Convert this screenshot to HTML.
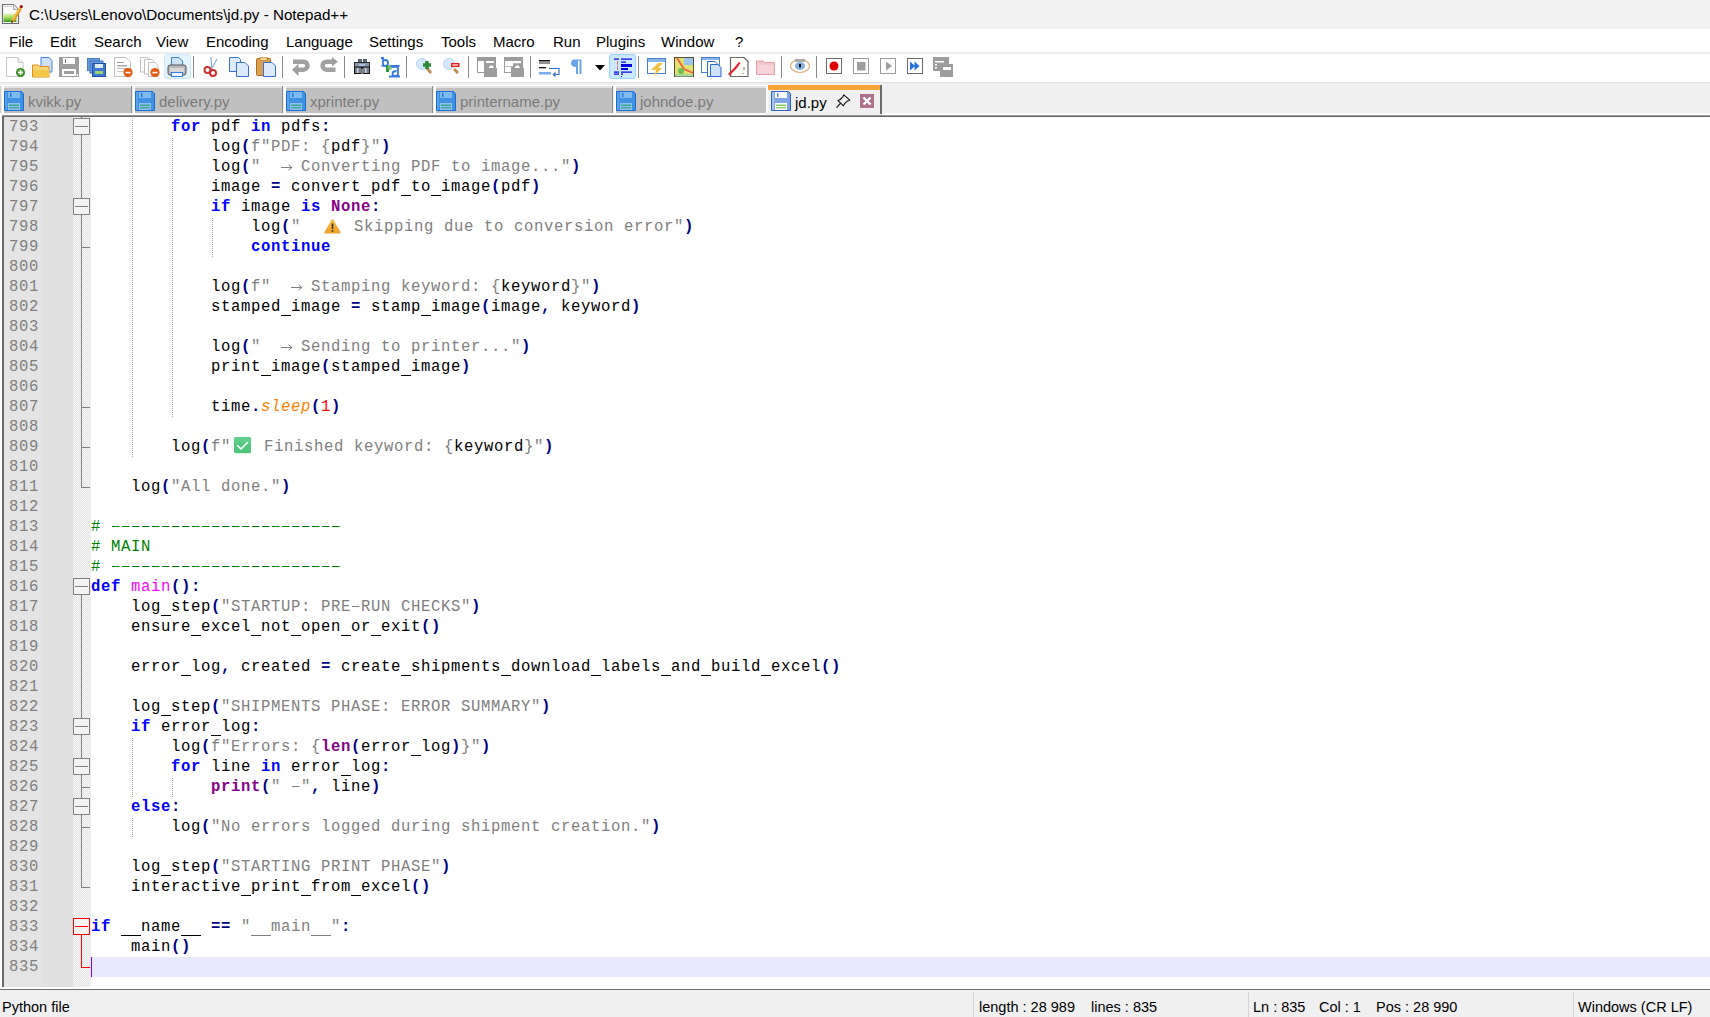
<!DOCTYPE html><html><head><meta charset="utf-8"><style>
*{margin:0;padding:0;box-sizing:border-box}
html,body{width:1710px;height:1017px;overflow:hidden;background:#fff;font-family:"Liberation Sans",sans-serif}
.abs{position:absolute}
#title{position:absolute;left:0;top:0;width:1710px;height:29px;background:#f2f2f2}
#title .t{position:absolute;left:29px;top:6px;font-size:15.2px;color:#000;white-space:pre}
#menu{position:absolute;left:0;top:29px;width:1710px;height:23px;background:#fff}
#menu span{position:absolute;top:4px;font-size:15px;color:#000;white-space:pre}
#sep1{position:absolute;left:0;top:52px;width:1710px;height:2px;background:#ededed}
#tool{position:absolute;left:0;top:54px;width:1710px;height:28px;background:#fff}
#tb1{position:absolute;left:0;top:82px;width:1710px;height:1px;background:#dedede}
#tabs{position:absolute;left:0;top:83px;width:1710px;height:32px;background:#f0f0f0}
.tab{position:absolute;top:2px;height:28px;background:linear-gradient(#fff 0 1.5px,#e2e2e2 1.5px 3px,#c0c0c0 3px)}
.tab .tx{position:absolute;top:8px;font-size:15px;color:#7a7a7a;white-space:pre}
#edframe{position:absolute;left:2px;top:115px;width:1708px;height:872px;background:linear-gradient(#9a9a9a 0 1px,#696969 1px)}
#stline{position:absolute;left:0;top:987px;width:1710px;height:4px;background:linear-gradient(#fff 0 2px,#6e6e6e 2px 3.5px,#f0f0f0 3.5px)}
#ed{position:absolute;left:4px;top:117px;width:1706px;height:870px;background:#fff;overflow:hidden}
#lnm{position:absolute;left:4px;top:117px;width:38px;height:870px;background:#e4e4e4}
#bmm{position:absolute;left:42px;top:117px;width:31px;height:870px;background:#e0e0e0}
#fdm{position:absolute;left:73px;top:117px;width:18px;height:870px;background-color:#f8f8f8;background-image:conic-gradient(#e2e2e2 25%,transparent 0 50%,#e2e2e2 0 75%,transparent 0);background-size:2px 2px}
.num{position:absolute;left:0;width:35px;height:20px;text-align:right;font-family:"Liberation Mono",monospace;font-size:15.6px;letter-spacing:0.64px;line-height:20px;color:#808080}
#nums{position:absolute;left:0;top:0}
.fm{position:absolute;left:73px}
.ln{position:absolute;left:91px;height:20px;width:1619px;font-family:"Liberation Mono",monospace;font-size:15.6px;letter-spacing:0.64px;line-height:20px;color:#000;white-space:pre}
.ln.cur{background:#e8e8ff}
.sp{white-space:pre}
.k{color:#0000ff;font-weight:bold}
.k2{color:#880088;font-weight:bold}
.s{color:#808080}
.o{color:#000080;font-weight:bold}
.c{color:#008000}
.d{color:#ff00ff}
.n{color:#ff0000}
.a{color:#ff8000;font-style:italic}
.ew{display:inline-block;width:23px;height:20px;vertical-align:top;position:relative}
.emo{position:absolute;left:0;top:0}
.usc{display:inline-block;width:10px;height:20px;vertical-align:top;-webkit-text-fill-color:transparent;background:linear-gradient(currentColor,currentColor) no-repeat 0 18px/10px 1.2px}
.dsh{display:inline-block;width:10px;height:20px;vertical-align:top;-webkit-text-fill-color:transparent;background:linear-gradient(currentColor,currentColor) no-repeat 1px 9px/7.5px 1px}
.arw{display:inline-block;width:10px;height:20px;vertical-align:top;position:relative}
.arw svg{position:absolute;left:0;top:0}
.ig{position:absolute;width:1px;height:20px;background-image:linear-gradient(transparent 50%,#a8a8a8 50%);background-size:1px 2px}
#caret{position:absolute;left:91px;top:957px;width:1px;height:20px;background:#8000ff}
#status{position:absolute;left:0;top:991px;width:1710px;height:26px;background:#f0f0f0}
#status span{position:absolute;top:8px;font-size:14.5px;color:#000;white-space:pre}
#status .sep{position:absolute;top:1px;width:1px;height:25px;background:#d5d5d5}
</style></head><body>
<div id="title"><svg class="abs" style="left:1px;top:3px" width="23" height="22" viewBox="0 0 23 22"><defs><linearGradient id="ng" x1="0" y1="0" x2="0" y2="1"><stop offset="0" stop-color="#e8f5c0"/><stop offset="0.45" stop-color="#a8dc60"/><stop offset="1" stop-color="#3a9a20"/></linearGradient></defs><path d="M1.5 1.5 H12.5 L17.5 6.5 V20.5 H1.5 Z" fill="#fbfbfb" stroke="#6e6e6e" stroke-width="1.2"/><path d="M12.5 1.5 V6.5 H17.5" fill="#e8e8e8" stroke="#9a9a9a" stroke-width="0.8"/><rect x="3" y="3" width="2" height="1" fill="#bbb"/><rect x="6" y="3" width="2" height="1" fill="#bbb"/><rect x="9" y="3" width="2" height="1" fill="#bbb"/><rect x="2.5" y="10.5" width="13" height="8.5" fill="url(#ng)"/><path d="M11.5 18.5 L19.6 5.2" stroke="#e8a020" stroke-width="3.2"/><path d="M11.3 17.2 L19 4.8" stroke="#f8d060" stroke-width="1"/><path d="M10.6 20.2 L11.8 17.6" stroke="#503010" stroke-width="1.2"/><circle cx="20.3" cy="3.6" r="1.6" fill="#a01010"/></svg><span class="t">C:\Users\Lenovo\Documents\jd.py - Notepad++</span></div>
<div id="menu"><span style="left:9px">File</span><span style="left:50px">Edit</span><span style="left:94px">Search</span><span style="left:156px">View</span><span style="left:206px">Encoding</span><span style="left:286px">Language</span><span style="left:369px">Settings</span><span style="left:441px">Tools</span><span style="left:493px">Macro</span><span style="left:553px">Run</span><span style="left:596px">Plugins</span><span style="left:661px">Window</span><span style="left:735px">?</span></div>
<div id="sep1"></div>
<div id="tool"><svg class="abs" style="left:5px;top:2px" width="22" height="22" viewBox="0 0 22 22"><path d="M1.5 1.5 H13 L18 6.5 V20.5 H1.5 Z" fill="#fff" stroke="#c8c8c8"/><path d="M13 1.5 V6.5 H18" fill="#eee" stroke="#c8c8c8"/><circle cx="15.5" cy="16.5" r="4.5" fill="#3a8a2a"/><circle cx="15.5" cy="16.5" r="3" fill="#5aa840"/><path d="M15.5 14 V19 M13 16.5 H18" stroke="#fff" stroke-width="1.4"/></svg><svg class="abs" style="left:32px;top:2px" width="21" height="22" viewBox="0 0 21 22"><path d="M9 1.5 H17 L20 4.5 V16 H9 Z" fill="#cfe1fb" stroke="#4a86d8"/><path d="M0.5 9 H6 L8 10.5 H17 V21 H0.5 Z" fill="#f6d774" stroke="#e08a20"/><path d="M1 14 H17 V21 H1Z" fill="#f3c94a"/></svg><svg class="abs" style="left:59px;top:3px" width="20" height="20" viewBox="0 0 20 20"><path d="M0 0 H20 V20 H0 Z" fill="#9d9d9d"/><rect x="4" y="1" width="12" height="6" fill="#fff"/><rect x="6" y="2" width="1" height="4" fill="#777"/><rect x="3" y="12" width="14" height="7" fill="#fff"/><rect x="5" y="14" width="10" height="3" fill="#9d9d9d"/><rect x="17.5" y="17" width="1.5" height="2" fill="#fff"/></svg><svg class="abs" style="left:87px;top:4px" width="19" height="19" viewBox="0 0 19 19"><rect x="0.5" y="0.5" width="12" height="12" fill="#6a9ee0" stroke="#4a7fc8"/><rect x="3" y="3" width="13" height="12" fill="#6a9ee0" stroke="#3a70c0"/><rect x="5.5" y="5.5" width="13" height="13" fill="#3f7ad0" stroke="#2050a8"/><rect x="8" y="6" width="8" height="4" fill="#dbe9fb"/><rect x="8" y="13" width="8" height="3" fill="#9ed36a"/></svg><svg class="abs" style="left:114px;top:3px" width="20" height="20" viewBox="0 0 20 20"><path d="M0.5 0.5 H12 L16.5 5 V19.5 H0.5 Z" fill="#fff" stroke="#c0c0c0"/><rect x="3" y="5" width="7" height="1" fill="#999"/><rect x="3" y="8" width="10" height="1.5" fill="#aaa"/><rect x="3" y="11" width="10" height="1" fill="#bbb"/><rect x="3" y="14" width="8" height="1" fill="#ccc"/><circle cx="14" cy="15.5" r="4.6" fill="#e05a10"/><rect x="11.5" y="14.8" width="5" height="1.6" fill="#fff"/></svg><svg class="abs" style="left:140px;top:3px" width="21" height="20" viewBox="0 0 21 20"><path d="M0.5 0.5 H8 L10 2.5 V15 H0.5 Z" fill="#fff" stroke="#c0c0c0"/><path d="M4.5 2.5 H12 L14 4.5 V17 H4.5 Z" fill="#fff" stroke="#c0c0c0"/><path d="M8.5 5.5 H15 L18 8.5 V19.5 H8.5 Z" fill="#fff" stroke="#c0c0c0"/><circle cx="15" cy="15.5" r="4.6" fill="#e05a10"/><rect x="12.5" y="14.8" width="5" height="1.6" fill="#fff"/></svg><div class="abs" style="left:164px;top:0px;width:27px;height:25px;background:#e5f3ff;border:1px solid #cce8ff;border-radius:3px"></div><svg class="abs" style="left:167px;top:3px" width="20" height="20" viewBox="0 0 20 20"><path d="M4.5 0.5 H12 L15.5 4 V9 H4.5 Z" fill="#cfe1fb" stroke="#3a7fd5"/><rect x="1" y="8" width="18" height="10" rx="2" fill="#b8b8b8" stroke="#555"/><rect x="3" y="11" width="14" height="4" fill="#d8d8d8"/><rect x="4.5" y="15.5" width="11" height="4" fill="#e8f2ff" stroke="#3a7fd5"/></svg><div class="abs" style="left:193px;top:2px;width:1px;height:22px;background:#8a8a8a"></div><svg class="abs" style="left:203px;top:3px" width="16" height="20" viewBox="0 0 16 20"><path d="M8 0 L9 14 M14 2 L8 13" stroke="#8ab0d8" stroke-width="1.2" fill="none"/><circle cx="4.5" cy="13" r="3" fill="none" stroke="#d03030" stroke-width="2"/><circle cx="10" cy="16" r="3" fill="none" stroke="#d03030" stroke-width="2"/></svg><svg class="abs" style="left:229px;top:3px" width="20" height="20" viewBox="0 0 20 20"><path d="M0.5 0.5 H9.5 L11.5 2.5 V14.5 H0.5 Z" fill="#ddeafc" stroke="#3a70d0"/><path d="M7.5 5.5 H16 L19.5 9 V19.5 H7.5 Z" fill="#ddeafc" stroke="#3a70d0"/></svg><svg class="abs" style="left:256px;top:3px" width="20" height="20" viewBox="0 0 20 20"><rect x="0.5" y="1.5" width="14" height="17" rx="1" fill="#d9a050" stroke="#b06a20"/><rect x="4" y="0.5" width="7" height="3" fill="#f4d890" stroke="#b06a20" stroke-width="0.5"/><path d="M7.5 5.5 H16 L19.5 9 V19.5 H7.5 Z" fill="#ddeafc" stroke="#3a70d0"/></svg><div class="abs" style="left:282px;top:2px;width:1px;height:22px;background:#8a8a8a"></div><svg class="abs" style="left:292px;top:4px" width="19" height="19" viewBox="0 0 19 19"><path d="M1 1.5 H11.5 A6.2 6.2 0 0 1 11.5 13.9 H6 V9.4 H11.5 A1.7 1.7 0 0 0 11.5 6 H1 Z" fill="#a0a0a0"/><path d="M0 11.7 L6.5 5.8 V18.2 Z" fill="#a0a0a0"/></svg><svg class="abs" style="left:319px;top:3px" width="19" height="20" viewBox="0 0 19 20"><path d="M14 2.5 H7.5 A6.2 6.2 0 0 0 7.5 14.9 H16.5 V10.4 H7.5 A1.7 1.7 0 0 1 7.5 7 H14 Z" fill="#a0a0a0"/><path d="M18.8 4.7 L13 0 V9.6 Z" fill="#a0a0a0"/></svg><div class="abs" style="left:344px;top:2px;width:1px;height:22px;background:#8a8a8a"></div><svg class="abs" style="left:354px;top:5px" width="16" height="15" viewBox="0 0 16 15"><rect x="4" y="0" width="4" height="4" fill="#5a6470"/><rect x="9" y="0" width="4" height="4" fill="#5a6470"/><rect x="0.5" y="3.5" width="15" height="5" fill="#8a98aa" stroke="#2a2e34"/><rect x="5" y="5" width="6" height="2" fill="#a8c0dc"/><rect x="0.5" y="8" width="7" height="6.5" fill="#7a8490" stroke="#111"/><rect x="8.5" y="8" width="7" height="6.5" fill="#7a8490" stroke="#111"/><rect x="3" y="9" width="1.5" height="5" fill="#c8d0dc"/><rect x="11" y="9" width="1.5" height="5" fill="#c8d0dc"/><rect x="7.6" y="9.5" width="0.9" height="5.5" fill="#fff"/></svg><svg class="abs" style="left:380px;top:3px" width="21" height="21" viewBox="0 0 21 21"><path d="M3 1 V9 M1 1 H4 M3 4.5 Q3 3 5.5 3 Q8 3 8 6 Q8 9 5.5 9 Q3 9 3 7" fill="none" stroke="#3a7ae0" stroke-width="1.8"/><path d="M1 9 H9" stroke="#3a7ae0" stroke-width="1"/><path d="M6 8 L12 12.5 L9 12.5 L9 15 L6 15 Z" fill="#2f9a40"/><circle cx="10" cy="10" r="2.2" fill="#7ac070"/><path d="M10.5 9 H19.5 M13 11 Q13 9.5 15 9.5 Q18 9.5 18 12 V19 M16.5 14 Q12.5 14 12.5 16.5 Q12.5 19 15 19 Q18 19 18 17 M9 19.5 H20" fill="none" stroke="#3a7ae0" stroke-width="1.8"/></svg><div class="abs" style="left:406px;top:2px;width:1px;height:22px;background:#8a8a8a"></div><svg class="abs" style="left:416px;top:4px" width="17" height="17" viewBox="0 0 17 17"><circle cx="6" cy="6" r="5.5" fill="#d6e8fb" stroke="#b8d4f4"/><path d="M12 9 L16 14 L14 16 L10 11Z" fill="#c08850"/><path d="M11 3 V11 M7 7 H15" stroke="#2e8b3a" stroke-width="3.5"/></svg><svg class="abs" style="left:443px;top:4px" width="17" height="17" viewBox="0 0 17 17"><circle cx="6" cy="6" r="5.5" fill="#d6e8fb" stroke="#b8d4f4"/><path d="M12 10 L16 14 L14 16 L10 12Z" fill="#c08850"/><rect x="8" y="5" width="8.5" height="4" fill="#e82020"/><rect x="9.5" y="6" width="5.5" height="2" fill="#f5a0a0"/></svg><div class="abs" style="left:468px;top:2px;width:1px;height:22px;background:#8a8a8a"></div><svg class="abs" style="left:477px;top:3px" width="21" height="21" viewBox="0 0 21 21"><rect x="0" y="0" width="19" height="16" fill="#9d9d9d"/><rect x="1" y="4" width="6" height="11" fill="#fff"/><rect x="9" y="4" width="8" height="2.3" fill="#fff"/><path d="M7 6.5 H9.5 V6 H17.5 V11 H20 V20 H7 Z" fill="#9d9d9d"/><path d="M13 8.5 H15.6 L17 11 H11.6 Z" fill="#fff"/></svg><svg class="abs" style="left:504px;top:3px" width="21" height="21" viewBox="0 0 21 21"><rect x="0" y="0" width="19" height="16" fill="#9d9d9d"/><rect x="1" y="4" width="16" height="5.3" fill="#fff"/><rect x="1" y="10" width="6" height="5" fill="#fff"/><path d="M7 9.6 H9 V6.3 H17.5 V11 H20 V20 H7 Z" fill="#9d9d9d"/><path d="M12 8.5 H14.6 L16 11 H10.6 Z" fill="#fff"/></svg><div class="abs" style="left:530px;top:2px;width:1px;height:22px;background:#8a8a8a"></div><svg class="abs" style="left:539px;top:4px" width="21" height="19" viewBox="0 0 21 19"><rect x="0" y="2" width="11" height="1.5" fill="#111"/><rect x="0" y="4.5" width="11" height="1" fill="#222"/><rect x="0" y="9" width="7" height="1.3" fill="#111"/><rect x="0" y="14" width="12" height="2.5" fill="#7aaeea"/><path d="M10 10.5 H20 V16.5 H16" fill="none" stroke="#3a70c8" stroke-width="1.2"/><path d="M13.5 16.5 L16.5 13.5 V19.5Z" fill="#3a70c8"/></svg><svg class="abs" style="left:571px;top:5px" width="11" height="16" viewBox="0 0 11 16"><path d="M3.5 0.5 H10.5 V15 H8.5 V2 H7 V15 H5 V8 Q0 8 0 4 Q0 0.5 3.5 0.5Z" fill="#6aa6ea"/></svg><svg class="abs" style="left:595px;top:11px" width="10" height="6" viewBox="0 0 10 6"><path d="M0 0 H10 L5 5.5Z" fill="#000"/></svg><div class="abs" style="left:609px;top:0px;width:27px;height:25px;background:#cce8ff;border:1px solid #99d1ff;border-radius:3px"></div><svg class="abs" style="left:614px;top:3px" width="19" height="20" viewBox="0 0 19 20"><rect x="0" y="1.5" width="5" height="1.2" fill="#0000e0"/><rect x="7" y="1.5" width="11" height="1.2" fill="#0000e0"/><rect x="3" y="4.5" width="1" height="1" fill="#e00"/><rect x="3" y="6.5" width="1" height="1" fill="#e00"/><rect x="3" y="9.5" width="1" height="1" fill="#e00"/><rect x="3" y="11.5" width="1" height="1" fill="#e00"/><rect x="7" y="4.5" width="5" height="1.2" fill="#0000e0"/><rect x="7" y="7" width="11" height="3" fill="#0000e0"/><rect x="7" y="11" width="7" height="2" fill="#0000e0"/><rect x="0" y="14.5" width="5" height="1.2" fill="#0000e0"/><rect x="7" y="14.5" width="11" height="1.2" fill="#0000e0"/><rect x="0" y="16.5" width="5" height="1.2" fill="#0000e0"/><rect x="7" y="16.5" width="2" height="1.2" fill="#0000e0"/><rect x="7" y="19" width="1" height="1" fill="#0000e0"/></svg><div class="abs" style="left:638px;top:2px;width:1px;height:22px;background:#8a8a8a"></div><svg class="abs" style="left:647px;top:4px" width="20" height="19" viewBox="0 0 20 19"><rect x="0.5" y="0.5" width="18" height="15" fill="#fff" stroke="#4a80c8"/><rect x="1" y="1" width="17" height="3" fill="#8ab4ec"/><path d="M5 11 L11 5 H16 L11 10 H15 L7 18 L9 12 H4Z" fill="#f0c040"/></svg><svg class="abs" style="left:674px;top:3px" width="20" height="20" viewBox="0 0 20 20"><rect x="0.5" y="0.5" width="19" height="19" fill="#e0e070" stroke="#5a5030"/><rect x="10" y="1" width="9" height="7" fill="#9cc4f0"/><path d="M3 1 L10 12 L19 16" stroke="#f06040" stroke-width="1.8" fill="none"/><circle cx="7" cy="14" r="3" fill="#70c050"/><rect x="1" y="17" width="18" height="2.5" fill="#a8d8a0"/></svg><svg class="abs" style="left:701px;top:3px" width="21" height="20" viewBox="0 0 21 20"><rect x="0.5" y="0.5" width="18" height="15" fill="#fff" stroke="#4a80c8"/><rect x="1" y="1" width="17" height="2" fill="#8ab4ec"/><path d="M6.5 4.5 H14 L17 7.5 V19.5 H6.5Z" fill="#fff" stroke="#2a6ad0"/><path d="M9.5 7.5 H17 L20 10.5 V19.5 H9.5Z" fill="#d0e2fa" stroke="#2a6ad0"/></svg><svg class="abs" style="left:728px;top:3px" width="21" height="20" viewBox="0 0 21 20"><path d="M2.5 0.5 H16 L20 4.5 V19.5 H2.5Z" fill="#fffdf6" stroke="#6a6a6a" stroke-width="1.2"/><path d="M0 17 L6 11 L11 5 L12.5 6 L9 11 L4 16 L2 19Z" fill="#e82030"/><path d="M16 10 V13 M15 16 V17" stroke="#777"/></svg><svg class="abs" style="left:756px;top:6px" width="19" height="15" viewBox="0 0 19 15"><path d="M0.5 1 H7 L8.5 2.5 H18.5 V14.5 H0.5Z" fill="#f3c8cc" stroke="#e8a0a8"/><rect x="1.5" y="5" width="16" height="9" fill="#f6d4d8"/></svg><div class="abs" style="left:781px;top:2px;width:1px;height:22px;background:#8a8a8a"></div><svg class="abs" style="left:790px;top:4px" width="20" height="16" viewBox="0 0 20 16"><ellipse cx="10" cy="8" rx="9.5" ry="6.5" fill="#fff" stroke="#e0b080" stroke-width="1.2"/><rect x="5" y="1" width="10" height="3" fill="#aaa"/><ellipse cx="10" cy="8" rx="5" ry="4" fill="#8ab0e0"/><rect x="9" y="6" width="2" height="3.5" fill="#111"/></svg><div class="abs" style="left:816px;top:2px;width:1px;height:22px;background:#8a8a8a"></div><svg class="abs" style="left:826px;top:4px" width="16" height="16" viewBox="0 0 16 16"><rect x="0.5" y="0.5" width="15" height="15" fill="#fff" stroke="#6a6a6a"/><circle cx="8" cy="8" r="4.5" fill="#dd0000"/></svg><svg class="abs" style="left:853px;top:4px" width="16" height="16" viewBox="0 0 16 16"><rect x="0.5" y="0.5" width="15" height="15" fill="#fff" stroke="#9a9a9a"/><rect x="4" y="4" width="8.5" height="8.5" fill="#9d9d9d"/></svg><svg class="abs" style="left:880px;top:4px" width="16" height="16" viewBox="0 0 16 16"><rect x="0.5" y="0.5" width="15" height="15" fill="#fff" stroke="#9a9a9a"/><path d="M6 3.5 L12 8 L6 12.5Z" fill="#9d9d9d"/></svg><svg class="abs" style="left:907px;top:4px" width="16" height="16" viewBox="0 0 16 16"><rect x="0.5" y="0.5" width="15" height="15" fill="#fff" stroke="#6a6a6a"/><path d="M3 3.5 L8 8 L3 12.5Z M7.5 3.5 L12.5 8 L7.5 12.5Z" fill="#2a70e0"/></svg><svg class="abs" style="left:933px;top:3px" width="20" height="20" viewBox="0 0 20 20"><rect x="0" y="0" width="16" height="14" fill="#9d9d9d"/><rect x="2" y="4" width="9" height="1.5" fill="#fff"/><rect x="2" y="7" width="2" height="1.5" fill="#fff"/><rect x="2" y="10" width="2" height="1.5" fill="#fff"/><rect x="7" y="7" width="13" height="13" fill="#9d9d9d"/><rect x="10" y="10" width="8" height="3" fill="#fff"/></svg></div>
<div id="tb1"></div>
<div id="tabs"><div class="abs" style="left:0;top:30px;width:1710px;height:2px;background:linear-gradient(#fafafa,#fff)"></div><div class="tab" style="left:0px;width:131px"><div class="abs" style="left:0;top:1px;width:1px;height:27px;background:#d0d0d0"></div><div class="abs" style="left:1px;top:1px;width:1px;height:27px;background:#e8e8e8"></div><div class="abs" style="left:2px;top:1px;width:1.5px;height:27px;background:#fff"></div><svg class="abs" style="left:4px;top:6px" width="20" height="20" viewBox="0 0 20 20"><path d="M0.5 0.5 H17.5 L19.5 2.5 V19.5 H0.5 Z" fill="#4191e2" stroke="#1b6cd2" stroke-width="1"/><rect x="1" y="1" width="2" height="18" fill="#5aa2ea"/><rect x="4" y="1" width="12" height="6" fill="#7fbbf0"/><rect x="6" y="2" width="1.5" height="4" fill="#2a74d4"/><rect x="4" y="12" width="12" height="7" fill="#8cc2f0"/><rect x="5" y="13.5" width="10" height="1.5" fill="#3fa392"/><rect x="5" y="16" width="10" height="1.5" fill="#45a598"/></svg><span class="tx" style="left:28px">kvikk.py</span></div><div class="tab" style="left:131px;width:151px"><div class="abs" style="left:0;top:1px;width:1px;height:27px;background:#8e8e8e"></div><div class="abs" style="left:1px;top:1px;width:1px;height:27px;background:#e8e8e8"></div><div class="abs" style="left:2px;top:1px;width:1.5px;height:27px;background:#fff"></div><svg class="abs" style="left:4px;top:6px" width="20" height="20" viewBox="0 0 20 20"><path d="M0.5 0.5 H17.5 L19.5 2.5 V19.5 H0.5 Z" fill="#4191e2" stroke="#1b6cd2" stroke-width="1"/><rect x="1" y="1" width="2" height="18" fill="#5aa2ea"/><rect x="4" y="1" width="12" height="6" fill="#7fbbf0"/><rect x="6" y="2" width="1.5" height="4" fill="#2a74d4"/><rect x="4" y="12" width="12" height="7" fill="#8cc2f0"/><rect x="5" y="13.5" width="10" height="1.5" fill="#3fa392"/><rect x="5" y="16" width="10" height="1.5" fill="#45a598"/></svg><span class="tx" style="left:28px">delivery.py</span></div><div class="tab" style="left:282px;width:150px"><div class="abs" style="left:0;top:1px;width:1px;height:27px;background:#8e8e8e"></div><div class="abs" style="left:1px;top:1px;width:1px;height:27px;background:#e8e8e8"></div><div class="abs" style="left:2px;top:1px;width:1.5px;height:27px;background:#fff"></div><svg class="abs" style="left:4px;top:6px" width="20" height="20" viewBox="0 0 20 20"><path d="M0.5 0.5 H17.5 L19.5 2.5 V19.5 H0.5 Z" fill="#4191e2" stroke="#1b6cd2" stroke-width="1"/><rect x="1" y="1" width="2" height="18" fill="#5aa2ea"/><rect x="4" y="1" width="12" height="6" fill="#7fbbf0"/><rect x="6" y="2" width="1.5" height="4" fill="#2a74d4"/><rect x="4" y="12" width="12" height="7" fill="#8cc2f0"/><rect x="5" y="13.5" width="10" height="1.5" fill="#3fa392"/><rect x="5" y="16" width="10" height="1.5" fill="#45a598"/></svg><span class="tx" style="left:28px">xprinter.py</span></div><div class="tab" style="left:432px;width:180px"><div class="abs" style="left:0;top:1px;width:1px;height:27px;background:#8e8e8e"></div><div class="abs" style="left:1px;top:1px;width:1px;height:27px;background:#e8e8e8"></div><div class="abs" style="left:2px;top:1px;width:1.5px;height:27px;background:#fff"></div><svg class="abs" style="left:4px;top:6px" width="20" height="20" viewBox="0 0 20 20"><path d="M0.5 0.5 H17.5 L19.5 2.5 V19.5 H0.5 Z" fill="#4191e2" stroke="#1b6cd2" stroke-width="1"/><rect x="1" y="1" width="2" height="18" fill="#5aa2ea"/><rect x="4" y="1" width="12" height="6" fill="#7fbbf0"/><rect x="6" y="2" width="1.5" height="4" fill="#2a74d4"/><rect x="4" y="12" width="12" height="7" fill="#8cc2f0"/><rect x="5" y="13.5" width="10" height="1.5" fill="#3fa392"/><rect x="5" y="16" width="10" height="1.5" fill="#45a598"/></svg><span class="tx" style="left:28px">printername.py</span></div><div class="tab" style="left:612px;width:154px"><div class="abs" style="left:0;top:1px;width:1px;height:27px;background:#8e8e8e"></div><div class="abs" style="left:1px;top:1px;width:1px;height:27px;background:#e8e8e8"></div><div class="abs" style="left:2px;top:1px;width:1.5px;height:27px;background:#fff"></div><svg class="abs" style="left:4px;top:6px" width="20" height="20" viewBox="0 0 20 20"><path d="M0.5 0.5 H17.5 L19.5 2.5 V19.5 H0.5 Z" fill="#4191e2" stroke="#1b6cd2" stroke-width="1"/><rect x="1" y="1" width="2" height="18" fill="#5aa2ea"/><rect x="4" y="1" width="12" height="6" fill="#7fbbf0"/><rect x="6" y="2" width="1.5" height="4" fill="#2a74d4"/><rect x="4" y="12" width="12" height="7" fill="#8cc2f0"/><rect x="5" y="13.5" width="10" height="1.5" fill="#3fa392"/><rect x="5" y="16" width="10" height="1.5" fill="#45a598"/></svg><span class="tx" style="left:28px">johndoe.py</span></div>
<div class="abs" style="left:766px;top:2px;width:116px;height:30px;background:#f0f0f0"><div class="abs" style="left:0;top:0;width:2px;height:28px;background:#fafafa"></div><div class="abs" style="left:2px;top:0;width:112px;height:5px;background:#faa53a"></div><div class="abs" style="left:114px;top:0;width:1.8px;height:29px;background:#6a6a6a"></div><svg class="abs" style="left:5px;top:6px" width="20" height="20" viewBox="0 0 20 20"><path d="M0.5 0.5 H17.5 L19.5 2.5 V19.5 H0.5 Z" fill="#7ea6e6" stroke="#2c5fc0" stroke-width="1"/><rect x="1" y="1" width="2" height="18" fill="#a8c4f0"/><rect x="4" y="1" width="12" height="6" fill="#ffffff"/><rect x="6" y="2" width="1.5" height="4" fill="#5a88d8"/><rect x="4" y="12" width="12" height="7" fill="#ffffff"/><rect x="5" y="13.5" width="10" height="1.5" fill="#88c860"/><rect x="5" y="16" width="10" height="1.5" fill="#98d070"/></svg><span class="abs" style="left:29px;top:8.5px;font-size:15px;color:#000">jd.py</span><svg class="abs" style="left:70px;top:9px" width="15" height="15" viewBox="0 0 15 15"><path d="M7.8 0.8 L13.8 6.2 L11.6 6.9 L8.6 9.6 L7.5 11.8 L2 6.6 L4.2 5.5 L7 2.6 Z" fill="none" stroke="#111" stroke-width="1.1" stroke-linejoin="round"/><path d="M4.6 9.2 L0.6 13.6" stroke="#111" stroke-width="1.2"/></svg><svg class="abs" style="left:94px;top:9px" width="14" height="14" viewBox="0 0 14 14"><rect width="14" height="14" fill="#b0718a"/><path d="M3.5 3.5 L10.5 10.5 M10.5 3.5 L3.5 10.5" stroke="#fff" stroke-width="2.4"/></svg></div>
</div>
<div id="edframe"></div><div id="stline"></div>
<div id="ed"></div>
<div id="lnm"></div><div id="bmm"></div><div id="fdm"></div>
<div id="nums" style="left:4px"><div class="num" style="top:117px">793</div><div class="num" style="top:137px">794</div><div class="num" style="top:157px">795</div><div class="num" style="top:177px">796</div><div class="num" style="top:197px">797</div><div class="num" style="top:217px">798</div><div class="num" style="top:237px">799</div><div class="num" style="top:257px">800</div><div class="num" style="top:277px">801</div><div class="num" style="top:297px">802</div><div class="num" style="top:317px">803</div><div class="num" style="top:337px">804</div><div class="num" style="top:357px">805</div><div class="num" style="top:377px">806</div><div class="num" style="top:397px">807</div><div class="num" style="top:417px">808</div><div class="num" style="top:437px">809</div><div class="num" style="top:457px">810</div><div class="num" style="top:477px">811</div><div class="num" style="top:497px">812</div><div class="num" style="top:517px">813</div><div class="num" style="top:537px">814</div><div class="num" style="top:557px">815</div><div class="num" style="top:577px">816</div><div class="num" style="top:597px">817</div><div class="num" style="top:617px">818</div><div class="num" style="top:637px">819</div><div class="num" style="top:657px">820</div><div class="num" style="top:677px">821</div><div class="num" style="top:697px">822</div><div class="num" style="top:717px">823</div><div class="num" style="top:737px">824</div><div class="num" style="top:757px">825</div><div class="num" style="top:777px">826</div><div class="num" style="top:797px">827</div><div class="num" style="top:817px">828</div><div class="num" style="top:837px">829</div><div class="num" style="top:857px">830</div><div class="num" style="top:877px">831</div><div class="num" style="top:897px">832</div><div class="num" style="top:917px">833</div><div class="num" style="top:937px">834</div><div class="num" style="top:957px">835</div></div>
<svg class="fm" style="top:117px" width="18" height="20"><rect x="8" y="0" width="1" height="2" fill="#808080"/><rect x="8" y="17" width="1" height="3" fill="#808080"/><rect x="0.5" y="1.5" width="16" height="16" fill="#f3f3f3" stroke="#808080" stroke-width="1"/><rect x="2" y="9" width="13" height="1" fill="#808080"/></svg><svg class="fm" style="top:137px" width="18" height="20"><rect x="8" y="0" width="1" height="20" fill="#808080"/></svg><svg class="fm" style="top:157px" width="18" height="20"><rect x="8" y="0" width="1" height="20" fill="#808080"/></svg><svg class="fm" style="top:177px" width="18" height="20"><rect x="8" y="0" width="1" height="20" fill="#808080"/></svg><svg class="fm" style="top:197px" width="18" height="20"><rect x="8" y="0" width="1" height="2" fill="#808080"/><rect x="8" y="17" width="1" height="3" fill="#808080"/><rect x="0.5" y="1.5" width="16" height="16" fill="#f3f3f3" stroke="#808080" stroke-width="1"/><rect x="2" y="9" width="13" height="1" fill="#808080"/></svg><svg class="fm" style="top:217px" width="18" height="20"><rect x="8" y="0" width="1" height="20" fill="#808080"/></svg><svg class="fm" style="top:237px" width="18" height="20"><rect x="8" y="0" width="1" height="20" fill="#808080"/><rect x="8" y="10" width="9" height="1" fill="#808080"/></svg><svg class="fm" style="top:257px" width="18" height="20"><rect x="8" y="0" width="1" height="20" fill="#808080"/></svg><svg class="fm" style="top:277px" width="18" height="20"><rect x="8" y="0" width="1" height="20" fill="#808080"/></svg><svg class="fm" style="top:297px" width="18" height="20"><rect x="8" y="0" width="1" height="20" fill="#808080"/></svg><svg class="fm" style="top:317px" width="18" height="20"><rect x="8" y="0" width="1" height="20" fill="#808080"/></svg><svg class="fm" style="top:337px" width="18" height="20"><rect x="8" y="0" width="1" height="20" fill="#808080"/></svg><svg class="fm" style="top:357px" width="18" height="20"><rect x="8" y="0" width="1" height="20" fill="#808080"/></svg><svg class="fm" style="top:377px" width="18" height="20"><rect x="8" y="0" width="1" height="20" fill="#808080"/></svg><svg class="fm" style="top:397px" width="18" height="20"><rect x="8" y="0" width="1" height="20" fill="#808080"/><rect x="8" y="10" width="9" height="1" fill="#808080"/></svg><svg class="fm" style="top:417px" width="18" height="20"><rect x="8" y="0" width="1" height="20" fill="#808080"/></svg><svg class="fm" style="top:437px" width="18" height="20"><rect x="8" y="0" width="1" height="20" fill="#808080"/><rect x="8" y="10" width="9" height="1" fill="#808080"/></svg><svg class="fm" style="top:457px" width="18" height="20"><rect x="8" y="0" width="1" height="20" fill="#808080"/></svg><svg class="fm" style="top:477px" width="18" height="20"><rect x="8" y="0" width="1" height="11" fill="#808080"/><rect x="8" y="10" width="9" height="1" fill="#808080"/></svg><svg class="fm" style="top:577px" width="18" height="20"><rect x="8" y="17" width="1" height="3" fill="#808080"/><rect x="0.5" y="1.5" width="16" height="16" fill="#f3f3f3" stroke="#808080" stroke-width="1"/><rect x="2" y="9" width="13" height="1" fill="#808080"/></svg><svg class="fm" style="top:597px" width="18" height="20"><rect x="8" y="0" width="1" height="20" fill="#808080"/></svg><svg class="fm" style="top:617px" width="18" height="20"><rect x="8" y="0" width="1" height="20" fill="#808080"/></svg><svg class="fm" style="top:637px" width="18" height="20"><rect x="8" y="0" width="1" height="20" fill="#808080"/></svg><svg class="fm" style="top:657px" width="18" height="20"><rect x="8" y="0" width="1" height="20" fill="#808080"/></svg><svg class="fm" style="top:677px" width="18" height="20"><rect x="8" y="0" width="1" height="20" fill="#808080"/></svg><svg class="fm" style="top:697px" width="18" height="20"><rect x="8" y="0" width="1" height="20" fill="#808080"/></svg><svg class="fm" style="top:717px" width="18" height="20"><rect x="8" y="0" width="1" height="2" fill="#808080"/><rect x="8" y="17" width="1" height="3" fill="#808080"/><rect x="0.5" y="1.5" width="16" height="16" fill="#f3f3f3" stroke="#808080" stroke-width="1"/><rect x="2" y="9" width="13" height="1" fill="#808080"/></svg><svg class="fm" style="top:737px" width="18" height="20"><rect x="8" y="0" width="1" height="20" fill="#808080"/></svg><svg class="fm" style="top:757px" width="18" height="20"><rect x="8" y="0" width="1" height="2" fill="#808080"/><rect x="8" y="17" width="1" height="3" fill="#808080"/><rect x="0.5" y="1.5" width="16" height="16" fill="#f3f3f3" stroke="#808080" stroke-width="1"/><rect x="2" y="9" width="13" height="1" fill="#808080"/></svg><svg class="fm" style="top:777px" width="18" height="20"><rect x="8" y="0" width="1" height="20" fill="#808080"/><rect x="8" y="10" width="9" height="1" fill="#808080"/></svg><svg class="fm" style="top:797px" width="18" height="20"><rect x="8" y="0" width="1" height="2" fill="#808080"/><rect x="8" y="17" width="1" height="3" fill="#808080"/><rect x="0.5" y="1.5" width="16" height="16" fill="#f3f3f3" stroke="#808080" stroke-width="1"/><rect x="2" y="9" width="13" height="1" fill="#808080"/></svg><svg class="fm" style="top:817px" width="18" height="20"><rect x="8" y="0" width="1" height="20" fill="#808080"/><rect x="8" y="10" width="9" height="1" fill="#808080"/></svg><svg class="fm" style="top:837px" width="18" height="20"><rect x="8" y="0" width="1" height="20" fill="#808080"/></svg><svg class="fm" style="top:857px" width="18" height="20"><rect x="8" y="0" width="1" height="20" fill="#808080"/></svg><svg class="fm" style="top:877px" width="18" height="20"><rect x="8" y="0" width="1" height="11" fill="#808080"/><rect x="8" y="10" width="9" height="1" fill="#808080"/></svg><svg class="fm" style="top:917px" width="18" height="20"><rect x="8" y="17" width="1" height="3" fill="#ff0000"/><rect x="0.5" y="1.5" width="16" height="16" fill="#f3f3f3" stroke="#ff0000" stroke-width="1"/><rect x="2" y="9" width="13" height="1" fill="#ff0000"/></svg><svg class="fm" style="top:937px" width="18" height="20"><rect x="8" y="0" width="1" height="20" fill="#ff0000"/></svg><svg class="fm" style="top:957px" width="18" height="20"><rect x="8" y="0" width="1" height="11" fill="#ff0000"/><rect x="8" y="10" width="9" height="1" fill="#ff0000"/></svg>
<div class="ig" style="left:132px;top:117px"></div><div class="ig" style="left:132px;top:137px"></div><div class="ig" style="left:172px;top:137px"></div><div class="ig" style="left:132px;top:157px"></div><div class="ig" style="left:172px;top:157px"></div><div class="ig" style="left:132px;top:177px"></div><div class="ig" style="left:172px;top:177px"></div><div class="ig" style="left:132px;top:197px"></div><div class="ig" style="left:172px;top:197px"></div><div class="ig" style="left:132px;top:217px"></div><div class="ig" style="left:172px;top:217px"></div><div class="ig" style="left:212px;top:217px"></div><div class="ig" style="left:132px;top:237px"></div><div class="ig" style="left:172px;top:237px"></div><div class="ig" style="left:212px;top:237px"></div><div class="ig" style="left:132px;top:257px"></div><div class="ig" style="left:172px;top:257px"></div><div class="ig" style="left:132px;top:277px"></div><div class="ig" style="left:172px;top:277px"></div><div class="ig" style="left:132px;top:297px"></div><div class="ig" style="left:172px;top:297px"></div><div class="ig" style="left:132px;top:317px"></div><div class="ig" style="left:172px;top:317px"></div><div class="ig" style="left:132px;top:337px"></div><div class="ig" style="left:172px;top:337px"></div><div class="ig" style="left:132px;top:357px"></div><div class="ig" style="left:172px;top:357px"></div><div class="ig" style="left:132px;top:377px"></div><div class="ig" style="left:172px;top:377px"></div><div class="ig" style="left:132px;top:397px"></div><div class="ig" style="left:172px;top:397px"></div><div class="ig" style="left:132px;top:417px"></div><div class="ig" style="left:132px;top:437px"></div><div class="ig" style="left:132px;top:737px"></div><div class="ig" style="left:132px;top:757px"></div><div class="ig" style="left:132px;top:777px"></div><div class="ig" style="left:172px;top:777px"></div><div class="ig" style="left:132px;top:817px"></div>
<div class="ln" style="top:117px"><span class="sp">        </span><span class="k">for</span> pdf <span class="k">in</span> pdfs<span class="o">:</span></div><div class="ln" style="top:137px"><span class="sp">            </span>log<span class="o">(</span><span class="s">f&quot;PDF: {</span>pdf<span class="s">}&quot;</span><span class="o">)</span></div><div class="ln" style="top:157px"><span class="sp">            </span>log<span class="o">(</span><span class="s">&quot;  <span class="arw"><svg width="12" height="20" viewBox="0 0 12 20"><path d="M0 10.5 H11" stroke="#808080" stroke-width="1"/><path d="M7.6 7.8 L11 10.5 L7.6 13.2" fill="none" stroke="#808080" stroke-width="1"/></svg></span> Converting PDF to image...&quot;</span><span class="o">)</span></div><div class="ln" style="top:177px"><span class="sp">            </span>image <span class="o">=</span> convert<span class="usc">_</span>pdf<span class="usc">_</span>to<span class="usc">_</span>image<span class="o">(</span>pdf<span class="o">)</span></div><div class="ln" style="top:197px"><span class="sp">            </span><span class="k">if</span> image <span class="k">is</span> <span class="k2">None</span><span class="o">:</span></div><div class="ln" style="top:217px"><span class="sp">                </span>log<span class="o">(</span><span class="s">&quot;  </span><span class="ew"><svg class="emo" width="23" height="20" viewBox="0 0 23 20"><defs><linearGradient id="wg" x1="0" y1="0" x2="0" y2="1"><stop offset="0" stop-color="#f7c14a"/><stop offset="1" stop-color="#eea02a"/></linearGradient></defs><path d="M11.5 2.2 Q12.2 2.2 12.6 3 L19.6 15.2 Q20 16.5 18.8 16.5 L4.2 16.5 Q3 16.5 3.4 15.2 L10.4 3 Q10.8 2.2 11.5 2.2 Z" fill="url(#wg)"/><path d="M11.5 6.5 V12" stroke="#3a3020" stroke-width="1.6"/><rect x="10.7" y="13.2" width="1.6" height="1.6" fill="#3a3020"/></svg></span><span class="s"> Skipping due to conversion error&quot;</span><span class="o">)</span></div><div class="ln" style="top:237px"><span class="sp">                </span><span class="k">continue</span></div><div class="ln" style="top:257px"><span class="sp"></span></div><div class="ln" style="top:277px"><span class="sp">            </span>log<span class="o">(</span><span class="s">f&quot;  <span class="arw"><svg width="12" height="20" viewBox="0 0 12 20"><path d="M0 10.5 H11" stroke="#808080" stroke-width="1"/><path d="M7.6 7.8 L11 10.5 L7.6 13.2" fill="none" stroke="#808080" stroke-width="1"/></svg></span> Stamping keyword: {</span>keyword<span class="s">}&quot;</span><span class="o">)</span></div><div class="ln" style="top:297px"><span class="sp">            </span>stamped<span class="usc">_</span>image <span class="o">=</span> stamp<span class="usc">_</span>image<span class="o">(</span>image<span class="o">,</span> keyword<span class="o">)</span></div><div class="ln" style="top:317px"><span class="sp"></span></div><div class="ln" style="top:337px"><span class="sp">            </span>log<span class="o">(</span><span class="s">&quot;  <span class="arw"><svg width="12" height="20" viewBox="0 0 12 20"><path d="M0 10.5 H11" stroke="#808080" stroke-width="1"/><path d="M7.6 7.8 L11 10.5 L7.6 13.2" fill="none" stroke="#808080" stroke-width="1"/></svg></span> Sending to printer...&quot;</span><span class="o">)</span></div><div class="ln" style="top:357px"><span class="sp">            </span>print<span class="usc">_</span>image<span class="o">(</span>stamped<span class="usc">_</span>image<span class="o">)</span></div><div class="ln" style="top:377px"><span class="sp"></span></div><div class="ln" style="top:397px"><span class="sp">            </span>time<span class="o">.</span><span class="a">sleep</span><span class="o">(</span><span class="n">1</span><span class="o">)</span></div><div class="ln" style="top:417px"><span class="sp"></span></div><div class="ln" style="top:437px"><span class="sp">        </span>log<span class="o">(</span><span class="s">f&quot;</span><span class="ew"><svg class="emo" width="23" height="20" viewBox="0 0 23 20"><rect x="3" y="0.3" width="17" height="16" rx="1.5" fill="#52c67e"/><rect x="3" y="0.3" width="17" height="6" rx="1.5" fill="#5cd08a"/><path d="M6.5 8.5 L10 12 L16.5 5.5" fill="none" stroke="#fff" stroke-width="1.6" stroke-linecap="round" stroke-linejoin="round"/></svg></span><span class="s"> Finished keyword: {</span>keyword<span class="s">}&quot;</span><span class="o">)</span></div><div class="ln" style="top:457px"><span class="sp"></span></div><div class="ln" style="top:477px"><span class="sp">    </span>log<span class="o">(</span><span class="s">&quot;All done.&quot;</span><span class="o">)</span></div><div class="ln" style="top:497px"><span class="sp"></span></div><div class="ln" style="top:517px"><span class="sp"></span><span class="c"># <span class="dsh">-</span><span class="dsh">-</span><span class="dsh">-</span><span class="dsh">-</span><span class="dsh">-</span><span class="dsh">-</span><span class="dsh">-</span><span class="dsh">-</span><span class="dsh">-</span><span class="dsh">-</span><span class="dsh">-</span><span class="dsh">-</span><span class="dsh">-</span><span class="dsh">-</span><span class="dsh">-</span><span class="dsh">-</span><span class="dsh">-</span><span class="dsh">-</span><span class="dsh">-</span><span class="dsh">-</span><span class="dsh">-</span><span class="dsh">-</span><span class="dsh">-</span></span></div><div class="ln" style="top:537px"><span class="sp"></span><span class="c"># MAIN</span></div><div class="ln" style="top:557px"><span class="sp"></span><span class="c"># <span class="dsh">-</span><span class="dsh">-</span><span class="dsh">-</span><span class="dsh">-</span><span class="dsh">-</span><span class="dsh">-</span><span class="dsh">-</span><span class="dsh">-</span><span class="dsh">-</span><span class="dsh">-</span><span class="dsh">-</span><span class="dsh">-</span><span class="dsh">-</span><span class="dsh">-</span><span class="dsh">-</span><span class="dsh">-</span><span class="dsh">-</span><span class="dsh">-</span><span class="dsh">-</span><span class="dsh">-</span><span class="dsh">-</span><span class="dsh">-</span><span class="dsh">-</span></span></div><div class="ln" style="top:577px"><span class="sp"></span><span class="k">def</span> <span class="d">main</span><span class="o">():</span></div><div class="ln" style="top:597px"><span class="sp">    </span>log<span class="usc">_</span>step<span class="o">(</span><span class="s">&quot;STARTUP: PRE<span class="dsh">-</span>RUN CHECKS&quot;</span><span class="o">)</span></div><div class="ln" style="top:617px"><span class="sp">    </span>ensure<span class="usc">_</span>excel<span class="usc">_</span>not<span class="usc">_</span>open<span class="usc">_</span>or<span class="usc">_</span>exit<span class="o">()</span></div><div class="ln" style="top:637px"><span class="sp"></span></div><div class="ln" style="top:657px"><span class="sp">    </span>error<span class="usc">_</span>log<span class="o">,</span> created <span class="o">=</span> create<span class="usc">_</span>shipments<span class="usc">_</span>download<span class="usc">_</span>labels<span class="usc">_</span>and<span class="usc">_</span>build<span class="usc">_</span>excel<span class="o">()</span></div><div class="ln" style="top:677px"><span class="sp"></span></div><div class="ln" style="top:697px"><span class="sp">    </span>log<span class="usc">_</span>step<span class="o">(</span><span class="s">&quot;SHIPMENTS PHASE: ERROR SUMMARY&quot;</span><span class="o">)</span></div><div class="ln" style="top:717px"><span class="sp">    </span><span class="k">if</span> error<span class="usc">_</span>log<span class="o">:</span></div><div class="ln" style="top:737px"><span class="sp">        </span>log<span class="o">(</span><span class="s">f&quot;Errors: {</span><span class="k2">len</span><span class="o">(</span>error<span class="usc">_</span>log<span class="o">)</span><span class="s">}&quot;</span><span class="o">)</span></div><div class="ln" style="top:757px"><span class="sp">        </span><span class="k">for</span> line <span class="k">in</span> error<span class="usc">_</span>log<span class="o">:</span></div><div class="ln" style="top:777px"><span class="sp">            </span><span class="k2">print</span><span class="o">(</span><span class="s">&quot; <span class="dsh">-</span>&quot;</span><span class="o">,</span> line<span class="o">)</span></div><div class="ln" style="top:797px"><span class="sp">    </span><span class="k">else</span><span class="o">:</span></div><div class="ln" style="top:817px"><span class="sp">        </span>log<span class="o">(</span><span class="s">&quot;No errors logged during shipment creation.&quot;</span><span class="o">)</span></div><div class="ln" style="top:837px"><span class="sp"></span></div><div class="ln" style="top:857px"><span class="sp">    </span>log<span class="usc">_</span>step<span class="o">(</span><span class="s">&quot;STARTING PRINT PHASE&quot;</span><span class="o">)</span></div><div class="ln" style="top:877px"><span class="sp">    </span>interactive<span class="usc">_</span>print<span class="usc">_</span>from<span class="usc">_</span>excel<span class="o">()</span></div><div class="ln" style="top:897px"><span class="sp"></span></div><div class="ln" style="top:917px"><span class="sp"></span><span class="k">if</span> <span class="usc">_</span><span class="usc">_</span>name<span class="usc">_</span><span class="usc">_</span> <span class="o">==</span> <span class="s">&quot;<span class="usc">_</span><span class="usc">_</span>main<span class="usc">_</span><span class="usc">_</span>&quot;</span><span class="o">:</span></div><div class="ln" style="top:937px"><span class="sp">    </span>main<span class="o">()</span></div><div class="ln cur" style="top:957px"><span class="sp"></span></div>
<div id="caret"></div>
<div id="status"><span style="left:2px">Python file</span><div class="sep" style="left:973px"></div><span style="left:979px">length : 28 989</span><span style="left:1091px">lines : 835</span><div class="sep" style="left:1248px"></div><span style="left:1253px">Ln : 835</span><span style="left:1319px">Col : 1</span><span style="left:1376px">Pos : 28 990</span><div class="sep" style="left:1573px"></div><span style="left:1578px">Windows (CR LF)</span></div>
</body></html>
